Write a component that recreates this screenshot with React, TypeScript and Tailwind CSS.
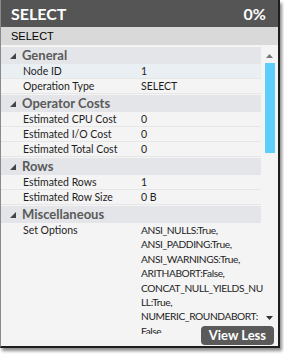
import React from 'react';

type Row = { label: string; value: string | string[]; active?: boolean };
type Section = { title: string; rows: Row[] };

const sections: Section[] = [
  {
    title: 'General',
    rows: [
      { label: 'Node ID', value: '1', active: true },
      { label: 'Operation Type', value: 'SELECT' },
    ],
  },
  {
    title: 'Operator Costs',
    rows: [
      { label: 'Estimated CPU Cost', value: '0' },
      { label: 'Estimated I/O Cost', value: '0' },
      { label: 'Estimated Total Cost', value: '0' },
    ],
  },
  {
    title: 'Rows',
    rows: [
      { label: 'Estimated Rows', value: '1' },
      { label: 'Estimated Row Size', value: '0 B' },
    ],
  },
  {
    title: 'Miscellaneous',
    rows: [
      {
        label: 'Set Options',
        value: [
          'ANSI_NULLS:True,',
          'ANSI_PADDING:True,',
          'ANSI_WARNINGS:True,',
          'ARITHABORT:False,',
          'CONCAT_NULL_YIELDS_NU',
          'LL:True,',
          'NUMERIC_ROUNDABORT:',
          'False',
        ],
      },
    ],
  },
];

const Caret = () => (
  <svg width="6" height="6" viewBox="0 0 6 6" className="shrink-0">
    <path d="M6 0 L6 6 L0 6 Z" fill="#444" />
  </svg>
);

const App: React.FC = () => {
  return (
    <div className="w-[284px] h-[354px] bg-white font-['Lato',sans-serif]">
      <div className="w-[280px] h-[348px] flex flex-col border-l border-[#8a8a8a] border-r-2 border-b-2 border-r-[#1e1e1e] border-b-[#1e1e1e] shadow-[2px_3px_3px_rgba(0,0,0,0.45)] relative">
        {/* Title */}
        <div className="h-[27px] shrink-0 bg-[#555555] flex items-center justify-between pl-[10px] pr-[12px] text-white font-bold text-[16px]">
          <span>SELECT</span>
          <span>0%</span>
        </div>
        <div className="h-[18px] shrink-0 bg-[#d9d9d9] flex items-center pl-[10px] text-[11px] text-black font-['Liberation_Sans',sans-serif]">
          SELECT
        </div>

        {/* Properties */}
        <div className="flex-1 min-h-0 flex bg-[#f4f4f4] overflow-hidden">
          <div className="w-[260px] shrink-0 pt-[2px]">
            {sections.map((section, i) => (
              <div key={section.title} className={i > 0 ? 'mt-[1px]' : ''}>
                <div className="h-[17px] bg-[#e3e5e8] flex items-center gap-[6px] pl-[9px]">
                  <Caret />
                  <span className="text-[13px] font-bold text-[#5a5a5a]">{section.title}</span>
                </div>
                {section.rows.map((row) => (
                  <div
                    key={row.label}
                    className={`flex text-[10.5px] text-[#1e1e1e] border-b border-[#e6e6e6] ${
                      row.active ? 'bg-[#e9eff3]' : ''
                    }`}
                  >
                    <div className="w-[140px] shrink-0 pl-[22px] h-[14px] leading-[14px]">{row.label}</div>
                    {Array.isArray(row.value) ? (
                      <div className="relative z-10 flex-1 text-[10.2px] leading-[14.4px] whitespace-nowrap tracking-[-0.4px]">
                        {row.value.map((line) => (
                          <div key={line}>{line}</div>
                        ))}
                      </div>
                    ) : (
                      <div className="flex-1 leading-[14px]">{row.value}</div>
                    )}
                  </div>
                ))}
              </div>
            ))}
          </div>

          {/* Scrollbar */}
          <div className="w-[17px] shrink-0 flex flex-col items-center pt-[9px]">
            <svg width="7" height="4" viewBox="0 0 7 4">
              <path d="M3.5 0 L7 4 L0 4 Z" fill="#777" />
            </svg>
            <div className="mt-[5px] w-[10px] h-[90px] bg-[#5fcdfc]" />
            <div className="flex-1" />
            <svg width="7" height="4" viewBox="0 0 7 4" className="mb-[14px]">
              <path d="M0 0 L7 0 L3.5 4 Z" fill="#333" />
            </svg>
          </div>
        </div>
        <div className="h-[12px] shrink-0 bg-[#f4f4f4]" />

        <button className="absolute right-[4px] bottom-[1px] h-[19px] px-[8px] rounded-[4px] bg-[#5a5a5a] text-white text-[13px] font-bold leading-none">
          View Less
        </button>
      </div>
    </div>
  );
};

export default App;
